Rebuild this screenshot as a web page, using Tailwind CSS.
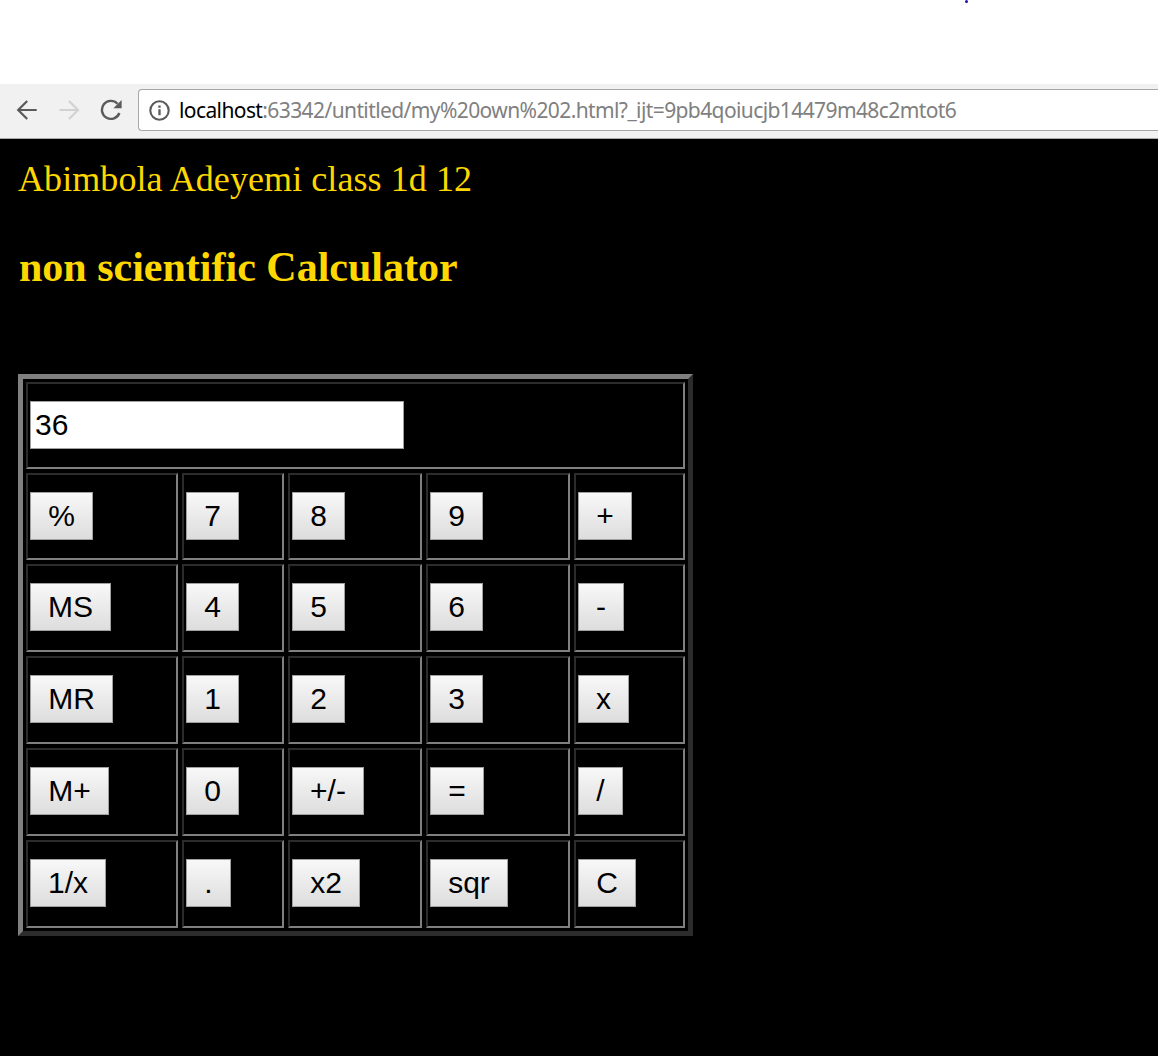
<!DOCTYPE html>
<html lang="en">
<head>
<meta charset="utf-8">
<title>Calculator</title>
<script src="https://cdn.jsdelivr.net/npm/@tailwindcss/browser@4"></script>
</head>
<body class="bg-white">
<div class="h-[1056px] w-[1158px] overflow-hidden flex flex-col">
  <div class="h-[84px] shrink-0 pl-[965px]"><div class="size-[3px] rounded-full bg-[#1c12b4]"></div></div>
  <header class="h-[55px] shrink-0 flex items-start bg-[#f1f1f1] border-b border-[#a9a9a9] pl-4 pt-[5px]">
    <div class="flex h-[42px] w-[122px] items-center gap-5">
      <svg class="size-[22px] shrink-0" viewBox="0 0 22 22" fill="none" stroke="#5a5a5a" stroke-width="2.2"><path d="M20.7 11H2.5M11.2 2L2.2 11l9 9"/></svg>
      <svg class="size-[22px] shrink-0" viewBox="0 0 22 22" fill="none" stroke="#d2d2d2" stroke-width="2.2"><path d="M1.5 11h18M11 2l9 9-9 9"/></svg>
      <svg class="size-[22px] shrink-0" viewBox="0 0 22 22" fill="none" stroke="#5a5a5a" stroke-width="2.4"><path d="M19.4 14A9 9 0 1 1 17.5 4.7"/><path d="M21.6 1v8.2h-8.2z" fill="#5a5a5a" stroke="none"/></svg>
    </div>
    <div class="flex h-[42px] flex-1 items-center rounded-l-[4px] border border-r-0 border-[#a6a6a6] bg-white pl-[10px]">
      <svg class="size-[21px] shrink-0" viewBox="0 0 21 21" fill="none" stroke="#5a5a5a" stroke-width="2.1"><circle cx="10.5" cy="10.5" r="9.2"/><path d="M10.5 9.3v6M10.5 5.5v2.2" stroke-width="2.3"/></svg>
      <span class="ml-[9px] whitespace-nowrap font-['Noto_Sans',sans-serif] text-[21px] leading-[30px] tracking-[-0.6px] text-[#808080]"><span class="text-black">localhost</span>:63342/untitled/my%20own%202.html?_ijt=9pb4qoiucjb14479m48c2mtot6</span>
    </div>
  </header>
  <main class="flex-1 bg-black pl-[18px] pt-[19px] font-['Liberation_Serif',serif] text-[#ffd700]">
    <p class="h-[42px] text-[36px] leading-[42px] tracking-[0.08px]">Abimbola Adeyemi class 1d 12</p>
    <h1 class="mt-[42px] h-[50px] pl-px text-[42px] font-bold leading-[50px]">non scientific Calculator</h1>
    <div class="mt-[82px] grid w-[675px] grid-cols-[152px_102px_134px_144px_111px] grid-rows-[87px_87px_88px_88px_88px_88px] gap-1 border-[5px] border-t-[#808080] border-l-[#808080] border-r-[#2c2c2c] border-b-[#2c2c2c] p-[3px] font-['Liberation_Sans',sans-serif] text-[30px] text-black
      [&>div]:border-2 [&>div]:border-t-[#2c2c2c] [&>div]:border-l-[#2c2c2c] [&>div]:border-r-[#808080] [&>div]:border-b-[#808080] [&>div]:pl-[2px] [&>div]:pt-[17px]
      [&_button]:block [&_button]:h-12 [&_button]:border [&_button]:border-[#a0a0a0] [&_button]:bg-linear-to-b [&_button]:from-[#f8f8f8] [&_button]:to-[#dddddd] [&_button]:text-center [&_button]:leading-[46px]">
      <div class="col-span-5"><input class="block h-12 w-[374px] border border-[#a0a0a0] bg-white pl-1" value="36"></div>
      <div><button class="w-[63px]">%</button></div>
      <div><button class="w-[53px]">7</button></div>
      <div><button class="w-[53px]">8</button></div>
      <div><button class="w-[53px]">9</button></div>
      <div><button class="w-[54px]">+</button></div>
      <div><button class="w-[81px]">MS</button></div>
      <div><button class="w-[53px]">4</button></div>
      <div><button class="w-[53px]">5</button></div>
      <div><button class="w-[53px]">6</button></div>
      <div><button class="w-[46px]">-</button></div>
      <div><button class="w-[83px]">MR</button></div>
      <div><button class="w-[53px]">1</button></div>
      <div><button class="w-[53px]">2</button></div>
      <div><button class="w-[53px]">3</button></div>
      <div><button class="w-[51px]">x</button></div>
      <div><button class="w-[79px]">M+</button></div>
      <div><button class="w-[53px]">0</button></div>
      <div><button class="w-[72px]">+/-</button></div>
      <div><button class="w-[54px]">=</button></div>
      <div><button class="w-[45px]">/</button></div>
      <div><button class="w-[76px]">1/x</button></div>
      <div><button class="w-[45px]">.</button></div>
      <div><button class="w-[68px]">x2</button></div>
      <div><button class="w-[78px]">sqr</button></div>
      <div><button class="w-[58px]">C</button></div>
    </div>
  </main>
</div>
</body>
</html>
